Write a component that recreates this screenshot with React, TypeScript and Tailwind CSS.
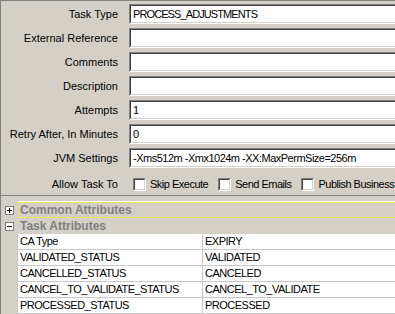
const fields = [
  { label: 'Task Type', value: 'PROCESS_ADJUSTMENTS' },
  { label: 'External Reference', value: '' },
  { label: 'Comments', value: '' },
  { label: 'Description', value: '' },
  { label: 'Attempts', value: '1' },
  { label: 'Retry After, In Minutes', value: '0' },
  { label: 'JVM Settings', value: '-Xms512m -Xmx1024m -XX:MaxPermSize=256m' },
];

const attributes = [
  { name: 'CA Type', value: 'EXPIRY' },
  { name: 'VALIDATED_STATUS', value: 'VALIDATED' },
  { name: 'CANCELLED_STATUS', value: 'CANCELED' },
  { name: 'CANCEL_TO_VALIDATE_STATUS', value: 'CANCEL_TO_VALIDATE' },
  { name: 'PROCESSED_STATUS', value: 'PROCESSED' },
];

function Checkbox({ label }: { label: string }) {
  return (
    <div className="flex items-center shrink-0">
      <div className="w-[13px] h-[13px] border border-[#808080] border-b-white border-r-white">
        <div className="w-full h-full bg-white border border-[#404040] border-b-[#d4d0c8] border-r-[#d4d0c8]" />
      </div>
      <span className="ml-[4px] whitespace-nowrap tracking-[-0.5px]">{label}</span>
    </div>
  );
}

function TreeBox({ open }: { open: boolean }) {
  return (
    <div className="relative w-[9px] h-[9px] border border-[#808080] bg-white">
      <div className="absolute left-[1px] top-[3px] w-[5px] h-px bg-black" />
      {!open && <div className="absolute left-[3px] top-[1px] w-px h-[5px] bg-black" />}
    </div>
  );
}

export default function App() {
  return (
    <div className="w-[395px] h-[314px] overflow-hidden bg-[#d4d0c8] font-['Liberation_Sans',Arial,sans-serif] text-[11px] text-black leading-none">
      {/* form panel */}
      <div className="h-[195px] border-l border-t border-[#808080] flex flex-col gap-[4px] pt-[3px]">
        {fields.map(f => (
          <div key={f.label} className="flex items-center h-[20px]">
            <div className="w-[117px] shrink-0 text-right whitespace-nowrap">{f.label}</div>
            <div className="ml-[11px] flex-1 h-[20px] border-t border-l border-[#808080] border-b border-b-white">
              <div className={`h-full bg-white border-t border-l border-[#404040] border-b border-b-[#d4d0c8] flex items-center pl-[2px] whitespace-nowrap ${f.value === 'PROCESS_ADJUSTMENTS' ? 'tracking-[-0.9px]' : 'tracking-[-0.5px]'}`}>
                {f.value}
              </div>
            </div>
          </div>
        ))}
        <div className="flex items-center h-[20px] mt-[2px]">
          <div className="w-[117px] shrink-0 text-right whitespace-nowrap">Allow Task To</div>
          <div className="ml-[15px] flex items-center gap-[10px]">
            <Checkbox label="Skip Execute" />
            <Checkbox label="Send Emails" />
            <Checkbox label="Publish Business" />
          </div>
        </div>
      </div>

      {/* attributes tree */}
      <div className="border-t border-[#808080] border-l pt-[5px]">
        <div className="flex h-[17px]">
          <div className="w-[17px] flex items-center justify-center pt-px"><TreeBox open={false} /></div>
          <div className="flex-1 border-t border-white">
            <div className="h-full border border-r-0 border-[#e6e65a] flex items-center pl-[1px] font-bold text-[12px] text-[#808080] whitespace-nowrap">
              Common Attributes
            </div>
          </div>
        </div>
        <div className="flex h-[16px]">
          <div className="w-[17px] flex items-center justify-center"><TreeBox open={true} /></div>
          <div className="flex-1 flex items-center pl-[2px] font-bold text-[12px] text-[#808080]">Task Attributes</div>
        </div>
        {attributes.map(a => (
          <div key={a.name} className="flex h-[16px]">
            <div className="w-[16px]" />
            <div className="w-[186px] bg-white border-l border-b border-r border-[#c8c8c8] flex items-center pl-[2px] whitespace-nowrap tracking-[-0.5px]">
              {a.name}
            </div>
            <div className="flex-1 bg-white border-b border-[#c8c8c8] flex items-center pl-[2px] whitespace-nowrap tracking-[-0.5px]">
              {a.value}
            </div>
          </div>
        ))}
      </div>
    </div>
  );
}
